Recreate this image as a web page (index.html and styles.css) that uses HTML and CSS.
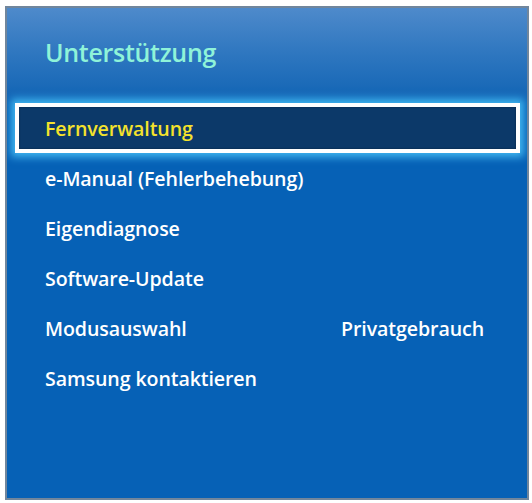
FILE: index.html
```html
<!DOCTYPE html>
<html lang="de">
<head>
<meta charset="utf-8">
<title>Unterstützung</title>
<link rel="stylesheet" href="styles.css">
</head>
<body>
<div class="panel">
  <div class="header">
    <h1 class="title">Unterstützung</h1>
  </div>
  <ul class="menu">
    <li class="item selected"><span class="label">Fernverwaltung</span></li>
    <li class="item"><span class="label">e-Manual (Fehlerbehebung)</span></li>
    <li class="item"><span class="label">Eigendiagnose</span></li>
    <li class="item"><span class="label">Software-Update</span></li>
    <li class="item"><span class="label">Modusauswahl</span><span class="value">Privatgebrauch</span></li>
    <li class="item"><span class="label">Samsung kontaktieren</span></li>
  </ul>
</div>
</body>
</html>
```

FILE: styles.css
```css
html, body {
  margin: 0;
  padding: 0;
  background: #ffffff;
}

body {
  font-family: "Open Sans", "DejaVu Sans", sans-serif;
}

.panel {
  margin: 6px 0 0 5px;
  width: 520px;
  height: 490px;
  border: 2px solid #71869c;
  background: linear-gradient(to bottom, #4e8acb 0px, #3279c1 40px, #1667b6 85px, #0661b6 100px, #0661b6 100%);
  box-sizing: content-box;
  overflow: hidden;
}

.header {
  height: 95px;
  padding-left: 38px;
  box-sizing: border-box;
}

.title {
  margin: 0;
  padding-top: 26px;
  font-size: 25px;
  line-height: 36px;
  font-weight: 600;
  color: #8ff3d9;
  letter-spacing: -0.3px;
}

.menu {
  list-style: none;
  margin: 0 0 0 8px;
  padding: 0;
  width: 505px;
}

.item {
  height: 50px;
  display: flex;
  align-items: center;
  justify-content: space-between;
  padding: 0 36px 0 30px;
  box-sizing: border-box;
  font-size: 19.6px;
  font-weight: 600;
  color: #ffffff;
  letter-spacing: -0.1px;
}

.item.selected {
  border: 4px solid #ffffff;
  background: #0c3969;
  color: #f4e22c;
  padding-left: 26px;
  box-shadow: 0 0 8px 4px rgba(80, 205, 255, 0.8), inset 0 0 2px rgba(0, 0, 0, 0.45);
}
```
